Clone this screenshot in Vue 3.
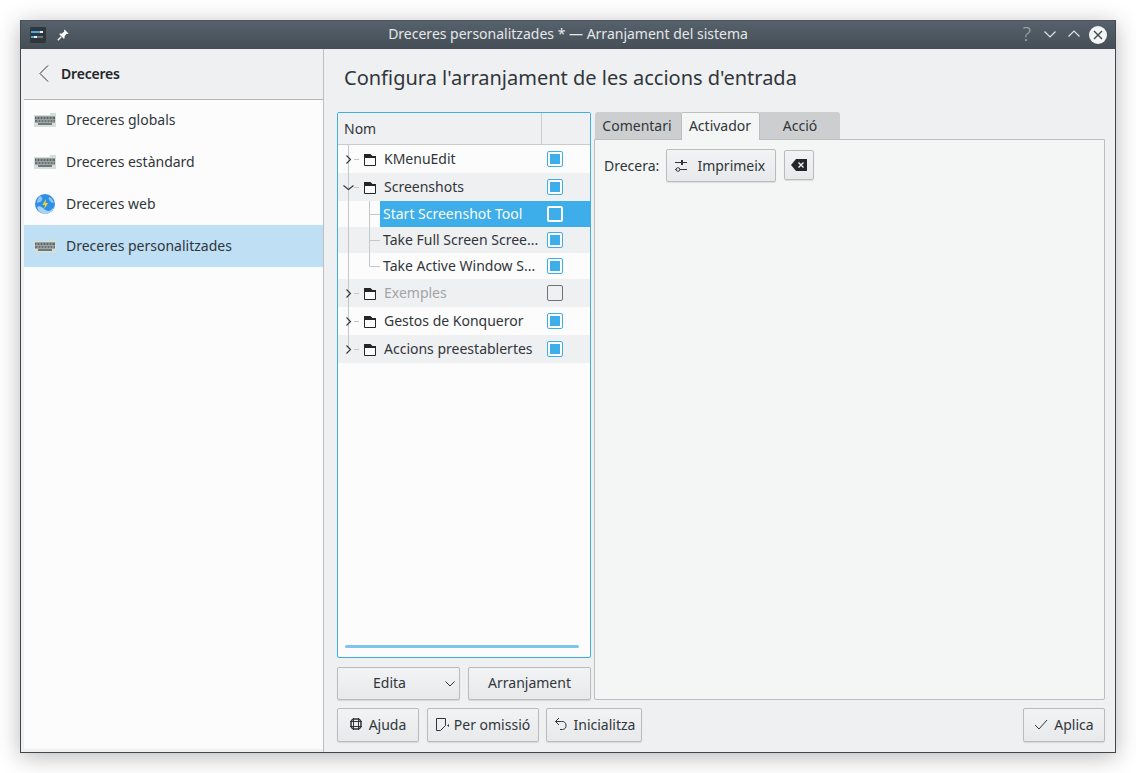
<template>
  <div class="page">
    <div class="window">
      <!-- title bar -->
      <header class="titlebar">
        <div class="tb-left">
          <svg class="app-icon" width="16" height="16" viewBox="0 0 16 16">
            <rect width="16" height="16" rx="1" fill="#30363b" />
            <rect x="1" y="4" width="9" height="2" fill="#3daee9" />
            <rect x="10" y="4" width="3" height="2" fill="#eff0f1" />
            <rect x="1" y="9" width="3" height="2" fill="#3daee9" />
            <rect x="4" y="9" width="3" height="2" fill="#eff0f1" />
            <rect x="7" y="9" width="6" height="2" fill="#6d757b" />
          </svg>
          <svg width="12" height="12" viewBox="0 0 12 12">
            <path d="M7.500.5 11.500 4.500 10.500 5 9.500 4.800 7.600 7.200 7.600 9.200 6.800 9.800 2.300 5.300 2.900 4.500 4.900 4.500 7.300 2.600 7 1.500Z" fill="#fcfcfc" />
            <path d="M4.200 7.800.8 11.200" stroke="#fcfcfc" stroke-width="1.300" />
          </svg>
        </div>
        <div class="tb-title">Dreceres personalitzades * — Arranjament del sistema</div>
        <div class="tb-right">
          <span class="tb-help">?</span>
          <svg class="tb-min" width="12" height="7" viewBox="0 0 12 7"><path d="M.5.5 6 6 11.500.5" fill="none" stroke="#dfe3e6" stroke-width="1.200" /></svg>
          <svg class="tb-max" width="12" height="7" viewBox="0 0 12 7"><path d="M.5 6.500 6 1 11.500 6.500" fill="none" stroke="#dfe3e6" stroke-width="1.200" /></svg>
          <svg width="18" height="18" viewBox="0 0 18 18">
            <circle cx="9" cy="9" r="9" fill="#f4f5f6" />
            <path d="M5 5l8 8M13 5l-8 8" stroke="#3f474e" stroke-width="1.400" />
          </svg>
        </div>
      </header>

      <div class="content">
        <!-- sidebar -->
        <aside class="sidebar">
          <div class="side-head">
            <svg width="10" height="17" viewBox="0 0 10 17"><path d="M9 .5 1 8.500l8 8" fill="none" stroke="#31363b" stroke-width="1" /></svg>
            <span>Dreceres</span>
          </div>
          <ul class="side-list">
            <li v-for="item in sideItems" :key="item.label" class="side-item" :class="{ selected: item.selected }">
              <svg v-if="item.icon === 'kbd'" class="side-icon" width="22" height="22" viewBox="0 0 22 22">
                <rect x="0" y="6" width="22" height="12" fill="#d5dedb" />
                <rect x="16" y="4" width="6" height="2" fill="#c8e2d6" />
                <rect x="1" y="7.500" width="20" height="3" fill="#5d6568" />
                <path d="M3 7.500v3M6 7.500v3M9 7.500v3M12 7.500v3M15 7.500v3M18 7.500v3" stroke="#a8b0b1" stroke-width="1" />
                <rect x="1" y="11" width="20" height="2.500" fill="#6a7274" />
                <path d="M4 11v2.500M7 11v2.500M10 11v2.500M13 11v2.500M16 11v2.500M19 11v2.500" stroke="#a8b0b1" stroke-width="1" />
                <rect x="4" y="14" width="14" height="2" fill="#70787a" />
              </svg>
              <svg v-else class="side-icon" width="22" height="22" viewBox="0 0 22 22">
                <circle cx="11" cy="11" r="10" fill="#2f8fe6" />
                <path d="M3 14c3-2 5 0 7 2s6 3 8 0l2-2c-1 4-5 7-9 7s-7-3-8-7Z" fill="#a9d3f5" />
                <path d="M6 3c2 1 3 2 2 4s-3 2-5 3c0-3 1-5 3-7ZM15 4c2 0 4 3 5 6-2 0-3-1-4-2s-2-3-1-4Z" fill="#8fc6f2" />
                <path d="M12 6 8.500 12h2.500l-1 4.500 4-6.500h-2.500Z" fill="#f6d32d" />
              </svg>
              <span class="side-label">{{ item.label }}</span>
            </li>
          </ul>
        </aside>

        <!-- main area -->
        <main class="main">
          <h1 class="page-title">Configura l'arranjament de les accions d'entrada</h1>
          <div class="columns">
            <div class="left-col">
              <div class="tree">
                <div class="tree-head">
                  <div class="th-name">Nom</div>
                  <div class="th-check"></div>
                </div>
                <div class="tree-rows">
                  <div
                    v-for="row in rows"
                    :key="row.label"
                    class="row"
                    :class="{ alt: row.alt, child: row.child, sel: row.sel }"
                  >
                    <svg class="branch" :width="row.child ? 42 : 23" :height="row.child ? 26 : 28">
                      <template v-if="row.child">
                        <path d="M10.500 0V26" stroke="#c5c8ca" />
                        <path :d="row.last ? 'M31.500 0V13.500H42' : 'M31.500 0V26M31.500 13.500H42'" stroke="#c5c8ca" fill="none" />
                      </template>
                      <template v-else>
                        <path :d="row.end ? 'M10.500 0V14' : 'M10.500 0V28'" stroke="#c5c8ca" />
                        <path d="M16 14.500h5" stroke="#c5c8ca" />
                        <path v-if="row.open" d="M5.500 12.500l5 4 5-4" fill="none" stroke="#31363b" stroke-width="1.100" />
                        <path v-else d="M8.500 10.500l4 4-4 4" fill="none" stroke="#31363b" stroke-width="1.100" />
                      </template>
                    </svg>
                    <svg v-if="!row.child" class="folder" width="12" height="12" viewBox="0 0 12 12">
                      <path d="M.5 11.500V1H6L8 3H11.500V11.500Z" fill="#fcfcfc" stroke="#232629" />
                      <path d="M0 0H6.500L8.500 2H12V4H0Z" fill="#232629" />
                    </svg>
                    <span class="row-label" :class="{ muted: row.muted }">{{ row.label }}</span>
                    <span class="check" :class="{ on: row.on, off: !row.on && !row.sel }"></span>
                  </div>
                </div>
                <div class="tree-scroll"><div class="tree-thumb"></div></div>
              </div>
              <div class="btn-row">
                <button class="btn edit-btn">
                  <span>Edita</span>
                  <svg width="10" height="6" viewBox="0 0 10 6"><path d="M.5.5 5 5 9.500.5" fill="none" stroke="#31363b" /></svg>
                </button>
                <button class="btn grow">Arranjament</button>
              </div>
            </div>

            <div class="right-col">
              <div class="tabs">
                <div v-for="tab in tabs" :key="tab.label" class="tab" :class="[tab.cls, { active: tab.active }]">{{ tab.label }}</div>
              </div>
              <div class="tab-pane">
                <span class="field-label">Drecera:</span>
                <button class="btn shortcut-btn">
                  <svg width="12" height="14" viewBox="0 0 12 14">
                    <path d="M0 3.500h12M0 10.500h12" stroke="#31363b" />
                    <rect x="6" y="1" width="2" height="5" fill="#31363b" />
                    <circle cx="3" cy="10.500" r="1.800" fill="#eff0f1" stroke="#31363b" />
                  </svg>
                  <span>Imprimeix</span>
                </button>
                <button class="btn clear-btn">
                  <svg width="16" height="12" viewBox="0 0 16 12">
                    <path d="M0 6 5 0h11v12H5Z" fill="#232629" />
                    <path d="M7.500 3.500l5 5M12.500 3.500l-5 5" stroke="#eff0f1" stroke-width="1.400" />
                  </svg>
                </button>
              </div>
            </div>
          </div>

          <footer class="footer">
            <button class="btn foot-btn help-btn">
              <svg width="12" height="12" viewBox="0 0 12 12">
                <rect x="1" y="1" width="10" height="10" rx="3.500" fill="none" stroke="#31363b" stroke-width="1.500" />
                <path d="M3.500 0V12M8.500 0V12M0 3.500H12M0 8.500H12" stroke="#31363b" />
              </svg>
              <span>Ajuda</span>
            </button>
            <button class="btn foot-btn default-btn">
              <svg width="13" height="13" viewBox="0 0 13 13">
                <path d="M9.500 7.500V.5H.5V12.500H4.500L9.500 7.500Z" fill="none" stroke="#31363b" />
                <path d="M13 6v3l-2-1.500Z" fill="#31363b" />
              </svg>
              <span>Per omissió</span>
            </button>
            <button class="btn foot-btn reset-btn">
              <svg width="13" height="14" viewBox="0 0 13 14">
                <path d="M5 1 1.500 4.500 5 8" fill="none" stroke="#31363b" />
                <path d="M1.500 4.500H7.500a4 4 0 0 1 1 8H6" fill="none" stroke="#31363b" />
              </svg>
              <span>Inicialitza</span>
            </button>
            <button class="btn foot-btn apply-btn">
              <svg width="14" height="11" viewBox="0 0 14 11"><path d="M1 6l4 4 8-9" fill="none" stroke="#31363b" /></svg>
              <span>Aplica</span>
            </button>
          </footer>
        </main>
      </div>
    </div>
  </div>
</template>

<script setup>
const sideItems = [
  { label: 'Dreceres globals', icon: 'kbd' },
  { label: 'Dreceres estàndard', icon: 'kbd' },
  { label: 'Dreceres web', icon: 'web' },
  { label: 'Dreceres personalitzades', icon: 'kbd', selected: true },
]

const rows = [
  { label: 'KMenuEdit', on: true },
  { label: 'Screenshots', on: true, alt: true, open: true },
  { label: 'Start Screenshot Tool', child: true, sel: true },
  { label: 'Take Full Screen Scree...', child: true, on: true, alt: true },
  { label: 'Take Active Window S...', child: true, on: true, last: true },
  { label: 'Exemples', alt: true, muted: true },
  { label: 'Gestos de Konqueror', on: true },
  { label: 'Accions preestablertes', on: true, alt: true, end: true },
]

const tabs = [
  { label: 'Comentari', cls: 'tab-a' },
  { label: 'Activador', cls: 'tab-b', active: true },
  { label: 'Acció', cls: 'tab-c' },
]
</script>

<style>
body {
  background: #ffffff;
}
</style>

<style scoped>
.page {
  width: 1136px;
  height: 773px;
  padding: 20px;
  box-sizing: border-box;
  font-family: "Noto Sans", sans-serif;
  font-size: 14px;
  color: #31363b;
  overflow: hidden;
}

.window {
  width: 1096px;
  height: 733px;
  box-sizing: border-box;
  border: 1px solid #3f474e;
  border-top-color: #4b5660;
  background: #eff0f1;
  display: flex;
  flex-direction: column;
  box-shadow: 0 4px 22px rgba(0, 0, 0, 0.28);
}

/* title bar */
.titlebar {
  height: 28px;
  flex: none;
  display: flex;
  align-items: center;
  background: linear-gradient(#56616b, #454e56);
  color: #e6e9eb;
  position: relative;
}

.tb-left {
  display: flex;
  align-items: center;
  gap: 11px;
  padding-left: 9px;
  width: 200px;
  box-sizing: border-box;
}

.tb-title {
  flex: 1;
  text-align: center;
  font-size: 14px;
  color: #e4e7e9;
  padding-bottom: 3px;
}

.tb-right {
  width: 200px;
  display: flex;
  align-items: center;
  justify-content: flex-end;
  padding-right: 8px;
  box-sizing: border-box;
}

.tb-help {
  font-size: 20px;
  font-weight: 300;
  line-height: 24px;
  color: #a3abb1;
  margin-bottom: 2px;
}

.tb-min {
  margin-left: 13px;
  margin-top: -1px;
}

.tb-max {
  margin-left: 12px;
  margin-right: 9px;
  margin-top: -3px;
}

/* sidebar */
.content {
  flex: 1;
  display: flex;
  min-height: 0;
}

.sidebar {
  width: 303px;
  flex: none;
  box-sizing: border-box;
  border-right: 1px solid #bcbebf;
  display: flex;
  flex-direction: column;
  padding-bottom: 3px;
}

.side-head {
  height: 51px;
  box-sizing: border-box;
  margin-left: 3px;
  border-bottom: 1px solid #b4b6b8;
  display: flex;
  align-items: center;
  gap: 12px;
  padding-left: 15px;
  font-weight: 600;
  color: #232629;
}

.side-head span {
  letter-spacing: -0.2px;
  margin-bottom: 2px;
}

.side-head svg {
  margin-bottom: 1px;
}

.side-list {
  list-style: none;
  margin: 0 0 0 3px;
  padding: 0;
  flex: 1;
  background: #fcfcfc;
}

.side-item {
  height: 42px;
  display: flex;
  align-items: center;
  gap: 10px;
  padding-left: 10px;
}

.side-item:first-child {
  height: 41px;
  padding-bottom: 1px;
  box-sizing: border-box;
}

.side-item.selected {
  background: #bedff4;
}

.side-icon {
  flex: none;
}

.side-label {
  margin-bottom: 2px;
}

/* main */
.main {
  flex: 1;
  min-width: 0;
  display: flex;
  flex-direction: column;
  padding: 0 10px 7px 13px;
}

.page-title {
  height: 63px;
  box-sizing: border-box;
  flex: none;
  margin: 0;
  padding: 0 0 6px 7px;
  display: flex;
  align-items: center;
  font-size: 20px;
  font-weight: 400;
  color: #31363b;
}

.columns {
  height: 588px;
  flex: none;
  display: flex;
  gap: 3px;
}

.left-col {
  width: 254px;
  flex: none;
  display: flex;
  flex-direction: column;
  gap: 9px;
}

.tree {
  flex: 1;
  min-height: 0;
  box-sizing: border-box;
  border: 1px solid #3daee9;
  border-radius: 2px;
  background: #fcfcfc;
  display: flex;
  flex-direction: column;
}

.tree-head {
  height: 32px;
  flex: none;
  display: flex;
  background: #eff0f1;
  border-bottom: 1px solid #c9cbcd;
  box-sizing: border-box;
}

.th-name {
  flex: 1;
  padding-left: 6px;
  line-height: 31px;
  border-right: 1px solid #c9cbcd;
}

.th-check {
  width: 48px;
}

.tree-rows {
  flex: 1;
}

.row {
  height: 28px;
  display: flex;
  position: relative;
}

.row.child {
  height: 26px;
}

.row.alt {
  background: #eff0f1;
}

.branch {
  flex: none;
  display: block;
}

.folder {
  flex: none;
  margin: 9px 8px 0 3px;
}

.row-label {
  flex: 1;
  min-width: 0;
  white-space: nowrap;
  line-height: 28px;
}

.row.child .row-label {
  padding-left: 3px;
  line-height: 26px;
}

.row.sel .row-label {
  background: #3daee9;
  color: #fcfcfc;
}

.row-label.muted {
  color: #a2a5a8;
}

.check {
  position: absolute;
  right: 27px;
  top: 50%;
  width: 16px;
  height: 16px;
  margin-top: -8px;
  box-sizing: border-box;
  border: 1px solid #3daee9;
  border-radius: 2px;
  background: #fcfcfc;
}

.check.on::after {
  content: "";
  display: block;
  margin: 2px;
  width: 10px;
  height: 10px;
  background: #3daee9;
}

.check.off {
  border-color: #6e7275;
  background: #eff0f1;
}

.row.sel .check {
  border: 2px solid #fcfcfc;
  background: #3daee9;
}

.tree-scroll {
  flex: none;
  height: 12px;
  padding: 0 11px 0 7px;
}

.tree-thumb {
  height: 3px;
  border-radius: 2px;
  background: #7cc6ee;
}

.btn-row {
  height: 33px;
  flex: none;
  display: flex;
  gap: 8px;
}

.btn {
  font: inherit;
  color: #31363b;
  box-sizing: border-box;
  border: 1px solid #b9bbbd;
  border-radius: 2px;
  background: linear-gradient(#f2f3f4, #e8e9ea);
  box-shadow: 0 1px 1px rgba(0, 0, 0, 0.1);
  display: flex;
  align-items: center;
  justify-content: center;
  padding: 0;
}

.btn-row .btn,
.foot-btn {
  padding-bottom: 2px;
}

.edit-btn {
  width: 123px;
  justify-content: flex-start;
  padding-left: 35px;
  gap: 39px;
}

.edit-btn svg {
  margin-top: 2px;
}

.grow {
  flex: 1;
}

/* tabs */
.right-col {
  flex: 1;
  min-width: 0;
  display: flex;
  flex-direction: column;
}

.tabs {
  height: 27px;
  flex: none;
  display: flex;
  padding-left: 1px;
  position: relative;
  z-index: 1;
}

.tab {
  box-sizing: border-box;
  text-align: center;
  line-height: 27px;
  background: #cdcecf;
}

.tab-a {
  width: 86px;
  padding-right: 2px;
  border-radius: 3px 0 0 0;
}

.tab-b {
  width: 79px;
  padding-right: 1px;
}

.tab-c {
  width: 80px;
  border-radius: 0 3px 0 0;
}

.tab.active {
  height: 28px;
  background: #f4f5f5;
  border: 1px solid #bcbebf;
  border-bottom: none;
  border-radius: 2px 2px 0 0;
  line-height: 25px;
}

.tab-pane {
  flex: 1;
  min-height: 0;
  box-sizing: border-box;
  border: 1px solid #bcbebf;
  border-radius: 0 0 2px 2px;
  background: #f4f5f5;
  padding: 9px 0 0 9px;
  display: flex;
  align-items: flex-start;
}

.field-label {
  line-height: 33px;
  margin-right: 7px;
}

.shortcut-btn {
  width: 110px;
  height: 33px;
  gap: 10px;
  padding-right: 2px;
  margin-right: 8px;
}

.clear-btn {
  width: 30px;
  height: 30px;
  margin-top: 1px;
}

/* footer */
.footer {
  height: 34px;
  flex: none;
  margin-top: 8px;
  display: flex;
}

.foot-btn {
  height: 34px;
  gap: 6px;
}

.help-btn {
  width: 82px;
  margin-right: 8px;
  gap: 7px;
}

.default-btn {
  width: 112px;
  margin-right: 7px;
  gap: 5px;
}

.reset-btn {
  width: 96px;
  gap: 7px;
  padding-left: 1px;
}

.apply-btn {
  width: 82px;
  margin-left: auto;
}
</style>
